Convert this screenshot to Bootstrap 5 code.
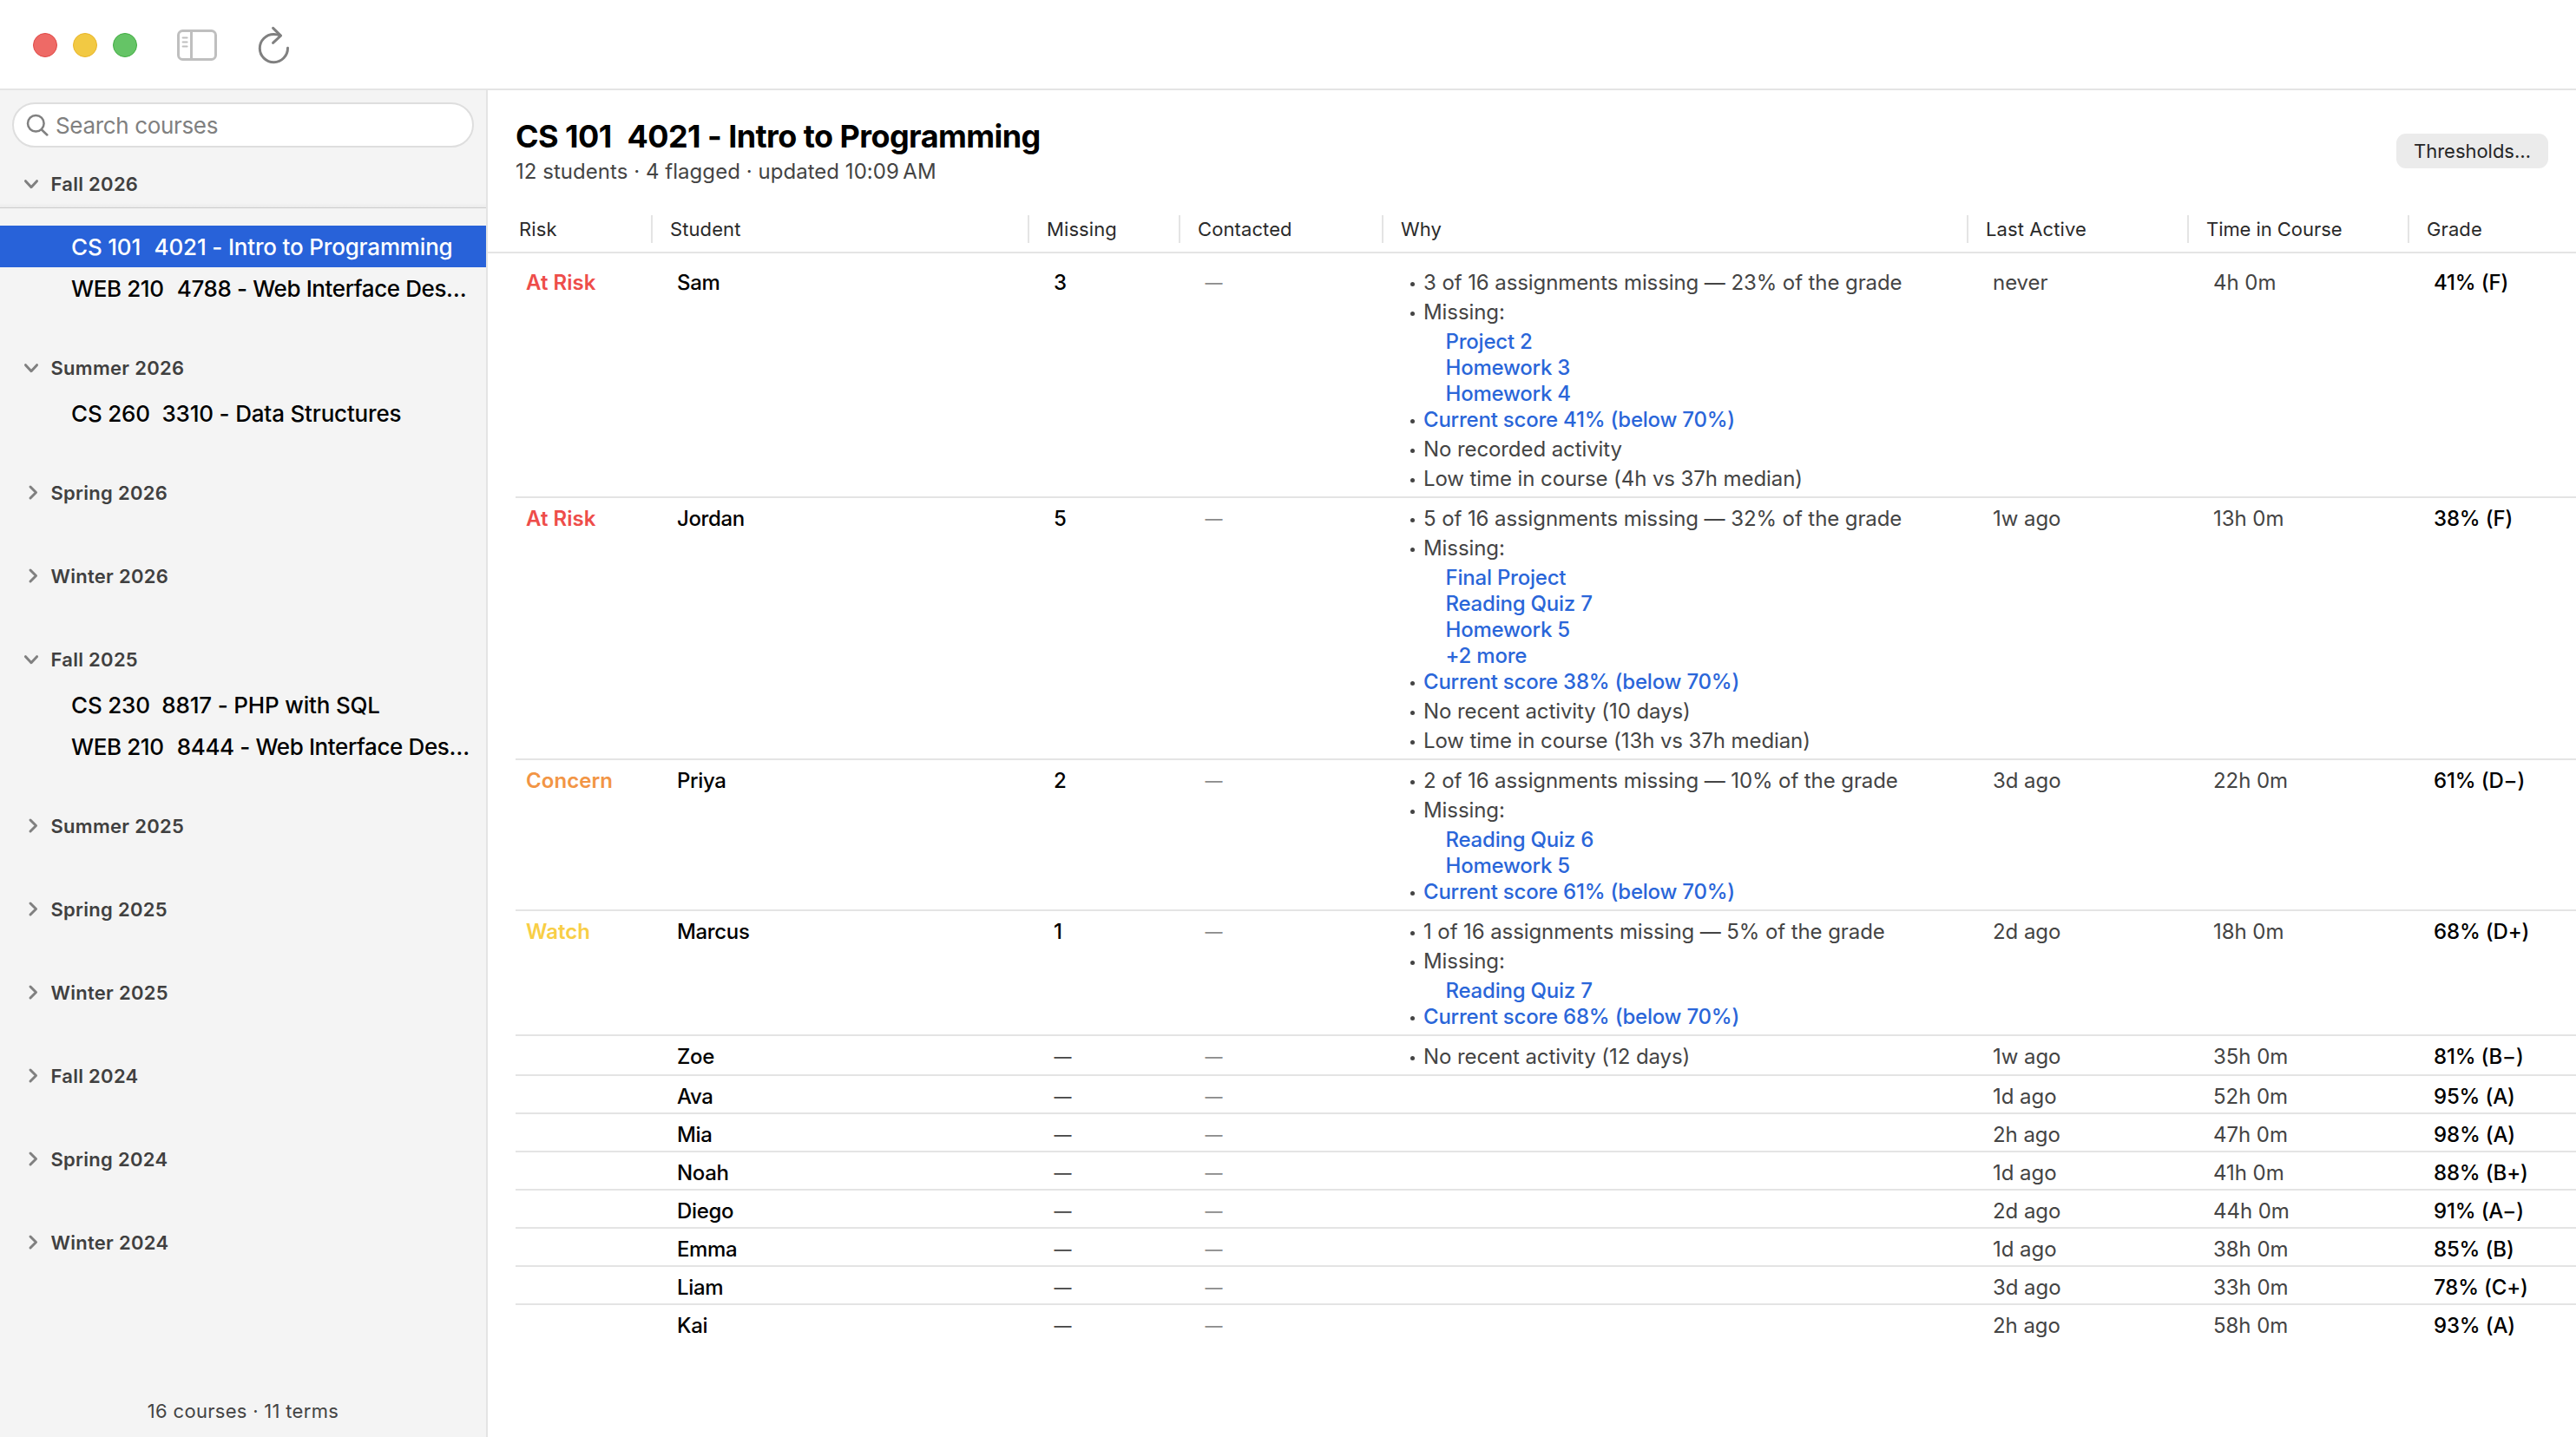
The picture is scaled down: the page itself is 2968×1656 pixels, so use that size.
<!DOCTYPE html>
<html lang="en">
<head>
<meta charset="utf-8">
<title>Intro to Programming</title>
<meta name="viewport" content="width=device-width, initial-scale=1">
<link href="https://cdn.jsdelivr.net/npm/bootstrap@5.3.0/dist/css/bootstrap.min.css" rel="stylesheet">
<style>
  body { font-family: Inter, "Liberation Sans", sans-serif; font-size: 24px; line-height: 30px; color: #000; background: #fff; }
  .titlebar { height: 104px; border-bottom: 2px solid #e4e4e4; padding: 2px 0 0 38px; }
  .lights { gap: 18px; }
  .light { width: 28px; height: 28px; border: 1px solid; }
  .light-close { background: #ee6a66; border-color: #e04a47; }
  .light-min { background: #f2c943; border-color: #e9b52a; }
  .light-max { background: #65c466; border-color: #43ad44; }

  .sidebar { width: 562px; background: #f4f4f4; border-right: 2px solid #e4e4e4; }
  .search { height: 52px; margin: 14px 14px 0; border: 2px solid #dedede; background: #fff; color: #808080; font-size: 26px; letter-spacing: -.34px; padding: 2px 0 0 22px; gap: 8px; }
  .search svg { margin: -3px 0 0 -8px; }
  .pinned { padding: 18px 0 3px; margin-bottom: 20px; border-bottom: 1px solid #cdcdcd; background: linear-gradient(to top, #ebebeb, #f4f4f4 5px); }
  .term { height: 48px; padding-left: 26px; gap: 12.5px; font-size: 22px; font-weight: 600; letter-spacing: .28px; color: #404040; }
  .term svg { width: 20px; height: 20px; }
  .group { margin-bottom: 48px; }
  .group-open { margin-bottom: 43px; }
  .group-open .term { margin-bottom: 5px; }
  .group-first { margin-bottom: 44px; }
  .course { height: 48px; line-height: 48px; padding-left: 82px; font-size: 26px; font-weight: 500; letter-spacing: -.18px; white-space: pre; color: #000; }
  .group-first .course { line-height: 50px; }
  .course-tight { letter-spacing: -.39px; }
  .course-active { background: #2862d9; color: #fff; }
  .side-foot { padding-bottom: 15px; font-size: 22px; letter-spacing: .3px; color: #444; }

  .head { padding: 31px 32px 25px 32px; }
  .head h1 { font-size: 36px; line-height: 44px; font-weight: 700; letter-spacing: -.58px; margin-bottom: 4px; white-space: pre; }
  .wide-gap { word-spacing: 1px; }
  .sub { letter-spacing: .04px; color: #444; }
  .btn-soft { width: 175px; height: 40px; padding: 0; border: 0; border-radius: 11px; background: #ebebeb; color: #262626; font-size: 22px; letter-spacing: -.04px; }

  .roster-row { display: grid; grid-template-columns: 158px 434px 174px 234px 674px 254px 254px 1fr; }
  .roster-head { height: 54px; padding-left: 32px; border-bottom: 2px solid #e4e4e4; align-items: center; font-size: 22px; letter-spacing: .1px; color: #2a2a2a; }
  .roster-head > div { height: 32px; line-height: 32px; padding-left: 20px; border-right: 2px solid #e4e4e4; }
  .roster-head > div:first-child { padding-left: 4px; }
  .roster-head > div:nth-child(7) { letter-spacing: -.06px; }
  .roster-head > div:last-child { border-right: 0; }
  .roster-body { padding: 10px 0 0 32px; }
  .student { border-bottom: 2px solid #e4e4e4; }
  .student:last-child { border-bottom: 0; }
  .student > div { padding: 9px 0 3px 28px; }
  .student > div:first-child { padding-left: 12px; font-weight: 600; letter-spacing: .05px; }
  .lv-risk { color: #ee4d4a; }
  .lv-concern { color: #f29545; }
  .lv-watch { color: #f8ce46; }
  .who, .num { font-weight: 500; letter-spacing: -.35px; }
  .grade { font-weight: 500; letter-spacing: -.17px; }
  .when { color: #444; letter-spacing: -.05px; }
  .dash { font-size: 20px; color: #444; padding-left: 28.5px !important; }
  .dash-soft { color: #8a8a8a; }
  .why { color: #444; letter-spacing: -.09px; }
  .why ul { margin: 0 0 2px; padding: 0; list-style: none; }
  .why li { padding-left: 18px; }
  .why li + .pt { margin-top: 4px; }
  .why .work + .pt { margin-top: 0; }
  .pt + .work { margin-top: 4px; }
  .pt { display: flex; align-items: center; }
  .pt::before { content: ""; width: 5px; height: 5px; border-radius: 50%; background: #444; margin: 3px 10px 0 -15px; }
  .why .work { padding-left: 43.500px; }
  .why a { color: #2a66d9; text-decoration: none; font-weight: 500; letter-spacing: -.22px; }
</style>
<script src="https://cdn.jsdelivr.net/npm/bootstrap@5.3.0/dist/js/bootstrap.bundle.min.js"></script>
</head>
<body>
<svg class="d-none">
  <symbol id="chev-down" viewBox="0 0 20 20"><path d="M3.500 6.700 10 13.700l6.500-7" fill="none" stroke="#808080" stroke-width="3" stroke-linecap="round" stroke-linejoin="round"/></symbol>
  <symbol id="chev-right" viewBox="0 0 20 20"><path d="M9 3l6.500 6.500L9 16" fill="none" stroke="#808080" stroke-width="3" stroke-linecap="round" stroke-linejoin="round"/></symbol>
</svg>
<div class="d-flex flex-column vh-100 overflow-hidden">
  <header class="titlebar d-flex align-items-center flex-shrink-0">
    <div class="lights d-flex">
      <span class="light light-close rounded-circle"></span>
      <span class="light light-min rounded-circle"></span>
      <span class="light light-max rounded-circle"></span>
    </div>
    <svg class="ms-4" width="158" height="60" viewBox="182 22 158 60" fill="none">
      <g stroke="#bfbfbf" stroke-width="3">
        <rect x="205.500" y="35.500" width="43" height="33" rx="5"/>
        <path d="M220.500 35.500v33"/>
        <path d="M210.700 43.500h4.800M210.700 48.500h4.800M210.700 53.500h4.800" stroke-width="2.200" stroke-linecap="round"/>
      </g>
      <g stroke="#808080" stroke-width="3" stroke-linecap="round" stroke-linejoin="round">
        <path d="M331.500 55.300A16.100 16.100 0 1 1 315.400 39.500Q319.500 39.500 323 41"/>
        <path d="M314.600 32.400l8.900 8.700-8.900 8.300"/>
      </g>
    </svg>
  </header>

  <div class="d-flex flex-grow-1 overflow-hidden">
    <aside class="sidebar d-flex flex-column flex-shrink-0">
      <div class="search d-flex align-items-center rounded-pill flex-shrink-0">
        <svg width="26" height="26" viewBox="0 0 26 26" fill="none" stroke="#808080" stroke-width="2.500" stroke-linecap="round"><circle cx="11.300" cy="11.300" r="9.300"/><path d="M18 18.500l6.300 6"/></svg>
        <span>Search courses</span>
      </div>
      <nav class="flex-grow-1">
        <div class="group-first">
          <div class="pinned"><div class="term d-flex align-items-center"><svg><use href="#chev-down"/></svg>Fall 2026</div></div>
          <div class="course course-active">CS 101<span class="wide-gap">&nbsp; </span>4021 - Intro to Programming</div>
          <div class="course course-tight">WEB 210<span class="wide-gap">&nbsp; </span>4788 - Web Interface Des…</div>
        </div>
        <div class="group-open">
          <div class="term d-flex align-items-center"><svg><use href="#chev-down"/></svg>Summer 2026</div>
          <div class="course">CS 260&nbsp; 3310 - Data Structures</div>
        </div>
        <div class="group term d-flex align-items-center"><svg><use href="#chev-right"/></svg>Spring 2026</div>
        <div class="group term d-flex align-items-center"><svg><use href="#chev-right"/></svg>Winter 2026</div>
        <div class="group-open">
          <div class="term d-flex align-items-center"><svg><use href="#chev-down"/></svg>Fall 2025</div>
          <div class="course">CS 230&nbsp; 8817 - PHP with SQL</div>
          <div class="course course-tight">WEB 210<span class="wide-gap">&nbsp; </span>8444 - Web Interface Des…</div>
        </div>
        <div class="group term d-flex align-items-center"><svg><use href="#chev-right"/></svg>Summer 2025</div>
        <div class="group term d-flex align-items-center"><svg><use href="#chev-right"/></svg>Spring 2025</div>
        <div class="group term d-flex align-items-center"><svg><use href="#chev-right"/></svg>Winter 2025</div>
        <div class="group term d-flex align-items-center"><svg><use href="#chev-right"/></svg>Fall 2024</div>
        <div class="group term d-flex align-items-center"><svg><use href="#chev-right"/></svg>Spring 2024</div>
        <div class="group term d-flex align-items-center"><svg><use href="#chev-right"/></svg>Winter 2024</div>
      </nav>
      <div class="side-foot text-center">16 courses · 11 terms</div>
    </aside>

    <main class="flex-grow-1">
      <div class="head d-flex justify-content-between align-items-center">
        <div>
          <h1>CS 101<span class="wide-gap">&nbsp; </span>4021 - Intro to Programming</h1>
          <div class="sub">12 students · 4 flagged · updated 10:09&#8201;AM</div>
        </div>
        <button class="btn btn-soft" type="button">Thresholds…</button>
      </div>

      <div class="roster-row roster-head">
        <div>Risk</div><div>Student</div><div>Missing</div><div>Contacted</div><div>Why</div><div>Last Active</div><div>Time in Course</div><div>Grade</div>
      </div>

      <div class="roster-body">
        <div class="roster-row student">
          <div class="lv-risk">At Risk</div><div class="who">Sam</div><div class="num">3</div><div class="dash dash-soft">—</div>
          <div class="why"><ul>
            <li class="pt">3 of 16 assignments missing — 23% of the grade</li>
            <li class="pt">Missing:</li>
            <li class="work"><a href="#">Project 2</a></li>
            <li class="work"><a href="#">Homework 3</a></li>
            <li class="work"><a href="#">Homework 4</a></li>
            <li class="pt"><a href="#">Current score 41% (below 70%)</a></li>
            <li class="pt">No recorded activity</li>
            <li class="pt">Low time in course (4h vs 37h median)</li>
          </ul></div>
          <div class="when">never</div><div class="when">4h 0m</div><div class="grade">41% (F)</div>
        </div>
        <div class="roster-row student">
          <div class="lv-risk">At Risk</div><div class="who">Jordan</div><div class="num">5</div><div class="dash dash-soft">—</div>
          <div class="why"><ul>
            <li class="pt">5 of 16 assignments missing — 32% of the grade</li>
            <li class="pt">Missing:</li>
            <li class="work"><a href="#">Final Project</a></li>
            <li class="work"><a href="#">Reading Quiz 7</a></li>
            <li class="work"><a href="#">Homework 5</a></li>
            <li class="work"><a href="#">+2 more</a></li>
            <li class="pt"><a href="#">Current score 38% (below 70%)</a></li>
            <li class="pt">No recent activity (10 days)</li>
            <li class="pt">Low time in course (13h vs 37h median)</li>
          </ul></div>
          <div class="when">1w ago</div><div class="when">13h 0m</div><div class="grade">38% (F)</div>
        </div>
        <div class="roster-row student">
          <div class="lv-concern">Concern</div><div class="who">Priya</div><div class="num">2</div><div class="dash dash-soft">—</div>
          <div class="why"><ul>
            <li class="pt">2 of 16 assignments missing — 10% of the grade</li>
            <li class="pt">Missing:</li>
            <li class="work"><a href="#">Reading Quiz 6</a></li>
            <li class="work"><a href="#">Homework 5</a></li>
            <li class="pt"><a href="#">Current score 61% (below 70%)</a></li>
          </ul></div>
          <div class="when">3d ago</div><div class="when">22h 0m</div><div class="grade">61% (D−)</div>
        </div>
        <div class="roster-row student">
          <div class="lv-watch">Watch</div><div class="who">Marcus</div><div class="num">1</div><div class="dash dash-soft">—</div>
          <div class="why"><ul>
            <li class="pt">1 of 16 assignments missing — 5% of the grade</li>
            <li class="pt">Missing:</li>
            <li class="work"><a href="#">Reading Quiz 7</a></li>
            <li class="pt"><a href="#">Current score 68% (below 70%)</a></li>
          </ul></div>
          <div class="when">2d ago</div><div class="when">18h 0m</div><div class="grade">68% (D+)</div>
        </div>
        <div class="roster-row student">
          <div></div><div class="who">Zoe</div><div class="dash">—</div><div class="dash dash-soft">—</div>
          <div class="why"><ul><li class="pt">No recent activity (12 days)</li></ul></div>
          <div class="when">1w ago</div><div class="when">35h 0m</div><div class="grade">81% (B−)</div>
        </div>
        <div class="roster-row student"><div></div><div class="who">Ava</div><div class="dash">—</div><div class="dash dash-soft">—</div><div></div><div class="when">1d ago</div><div class="when">52h 0m</div><div class="grade">95% (A)</div></div>
        <div class="roster-row student"><div></div><div class="who">Mia</div><div class="dash">—</div><div class="dash dash-soft">—</div><div></div><div class="when">2h ago</div><div class="when">47h 0m</div><div class="grade">98% (A)</div></div>
        <div class="roster-row student"><div></div><div class="who">Noah</div><div class="dash">—</div><div class="dash dash-soft">—</div><div></div><div class="when">1d ago</div><div class="when">41h 0m</div><div class="grade">88% (B+)</div></div>
        <div class="roster-row student"><div></div><div class="who">Diego</div><div class="dash">—</div><div class="dash dash-soft">—</div><div></div><div class="when">2d ago</div><div class="when">44h 0m</div><div class="grade">91% (A−)</div></div>
        <div class="roster-row student"><div></div><div class="who">Emma</div><div class="dash">—</div><div class="dash dash-soft">—</div><div></div><div class="when">1d ago</div><div class="when">38h 0m</div><div class="grade">85% (B)</div></div>
        <div class="roster-row student"><div></div><div class="who">Liam</div><div class="dash">—</div><div class="dash dash-soft">—</div><div></div><div class="when">3d ago</div><div class="when">33h 0m</div><div class="grade">78% (C+)</div></div>
        <div class="roster-row student"><div></div><div class="who">Kai</div><div class="dash">—</div><div class="dash dash-soft">—</div><div></div><div class="when">2h ago</div><div class="when">58h 0m</div><div class="grade">93% (A)</div></div>
      </div>
    </main>
  </div>
</div>
</body>
</html>
